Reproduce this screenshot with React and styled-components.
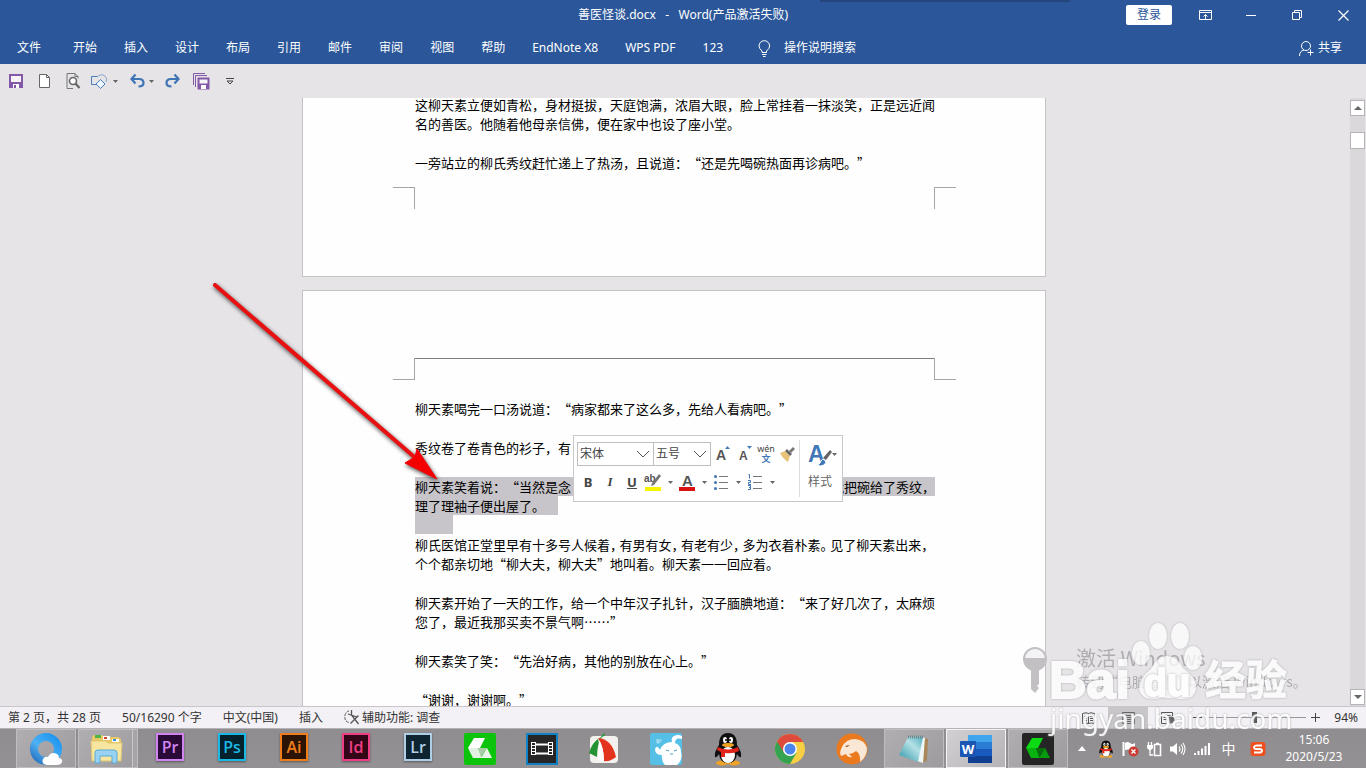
import React from 'react'
import styled, { createGlobalStyle, css } from 'styled-components'

const tabs = ['开始', '插入', '设计', '布局', '引用', '邮件', '审阅', '视图', '帮助', 'EndNote X8', 'WPS PDF', '123']

const adobe = [
  { name: 'Pr', color: '#d183f2', bg: '#2a0a36' },
  { name: 'Ps', color: '#1cb8e4', bg: '#04222e' },
  { name: 'Ai', color: '#f07d1c', bg: '#2c1404' },
  { name: 'Id', color: '#ee3f86', bg: '#330617' },
  { name: 'Lr', color: '#aecfe6', bg: '#0f2431' },
]

export default function App() {
  return (
    <>
      <GlobalStyle />
      <Screen lang="zh-CN">
        <Header>
          <TitleBar>
            <span />
            <Title>善医怪谈.docx&nbsp;&nbsp; -&nbsp;&nbsp; Word(产品激活失败)</Title>
            <WindowButtons>
              <LoginButton>登录</LoginButton>
              <WindowButton aria-label="功能区显示选项"><RibbonIcon /></WindowButton>
              <WindowButton aria-label="最小化"><MinimizeIcon /></WindowButton>
              <WindowButton aria-label="还原"><RestoreIcon /></WindowButton>
              <WindowButton aria-label="关闭"><CloseIcon /></WindowButton>
            </WindowButtons>
          </TitleBar>
          <TabBar>
            <FileTab>文件</FileTab>
            {tabs.map((t) => <Tab key={t}>{t}</Tab>)}
            <TellMe><BulbIcon />操作说明搜索</TellMe>
            <Share><PersonIcon />共享</Share>
          </TabBar>
          <TopShade />
        </Header>

        <QuickAccess>
          <QuickGroup>
            <QuickButton $w={32} aria-label="保存"><SaveIcon /></QuickButton>
            <QuickButton $w={25} aria-label="新建"><NewIcon /></QuickButton>
            <QuickButton $w={33} aria-label="打印预览"><PreviewIcon /></QuickButton>
            <QuickButton $w={18} aria-label="形状"><ShapesIcon /></QuickButton>
            <QuickButton $w={14} aria-label="形状选项"><Caret /></QuickButton>
          </QuickGroup>
          <QuickGroup>
            <QuickButton $w={22} aria-label="撤消"><UndoIcon /></QuickButton>
            <QuickButton $w={6} aria-label="撤消选项"><Caret /></QuickButton>
            <QuickButton $w={36} aria-label="恢复"><UndoIcon flip /></QuickButton>
            <QuickButton $w={22} aria-label="全部保存"><SaveAllIcon /></QuickButton>
            <QuickButton $w={36} aria-label="自定义快速访问工具栏"><MoreIcon /></QuickButton>
          </QuickGroup>
        </QuickAccess>

        <Workspace>
          <Canvas>
            <Page $first>
              <Body>
                <Paragraph>
                  <Line>这柳天素立便如青松，身材挺拔，天庭饱满，浓眉大眼，脸上常挂着一抹淡笑，正是远近闻</Line>
                  <Line>名的善医。他随着他母亲信佛，便在家中也设了座小堂。</Line>
                </Paragraph>
                <Paragraph>
                  <Line>一旁站立的柳氏秀纹赶忙递上了热汤，且说道：“还是先喝碗热面再诊病吧。”</Line>
                </Paragraph>
              </Body>
              <Corners $bottom>
                <Corner $side="left" $bottom />
                <Corner $side="right" $bottom />
              </Corners>
            </Page>

            <Page>
              <Corners>
                <Corner $side="left" />
                <HeaderRule />
                <Corner $side="right" />
              </Corners>
              <Body>
                <Paragraph><Line>柳天素喝完一口汤说道：“病家都来了这么多，先给人看病吧。”</Line></Paragraph>
                <Paragraph><Line>秀纹卷了卷青色的衫子，有</Line></Paragraph>
                <Selected>
                  <SplitLine>
                    <span>柳天素笑着说：“当然是念</span>
                    <span>就把碗给了秀纹，</span>
                  </SplitLine>
                  <Line><Mark $w={143}>理了理袖子便出屋了。</Mark></Line>
                  <Line><Mark $w={38} /></Line>
                </Selected>
                <Paragraph>
                  <Line>
                    柳氏医馆正堂里早有十多号人候着<Tight>，</Tight>有男有女<Tight>，</Tight>有老有少<Tight>，</Tight>多为衣着朴素<Tight>。</Tight>见了柳天素出来，
                  </Line>
                  <Line>个个都亲切地“柳大夫，柳大夫”地叫着。柳天素一一回应着。</Line>
                </Paragraph>
                <Paragraph>
                  <Line>柳天素开始了一天的工作，给一个中年汉子扎针，汉子腼腆地道：“来了好几次了，太麻烦</Line>
                  <Line>您了，最近我那买卖不景气啊……”</Line>
                </Paragraph>
                <Paragraph><Line>柳天素笑了笑：“先治好病，其他的别放在心上。”</Line></Paragraph>
                <Paragraph><Line>“谢谢，谢谢啊。”</Line></Paragraph>
              </Body>
              <MiniToolbar />
              <Arrow />
            </Page>
          </Canvas>
          <Scrollbar>
            <ScrollButton aria-label="向上滚动"><ScrollArrow up /></ScrollButton>
            <Thumb />
            <ScrollButton aria-label="向下滚动"><ScrollArrow /></ScrollButton>
          </Scrollbar>
        </Workspace>

        <StatusBar>
          <StatusText>第 2 页，共 28 页</StatusText>
          <StatusText>50/16290 个字</StatusText>
          <StatusText>中文(中国)</StatusText>
          <StatusText>插入</StatusText>
          <StatusText><AccessIcon />辅助功能: 调查</StatusText>
          <Views>
            <ViewButton aria-label="阅读视图"><ReadIcon /></ViewButton>
            <ViewButton $active aria-label="页面视图"><PrintIcon /></ViewButton>
            <ViewButton aria-label="Web 版式视图"><WebIcon /></ViewButton>
            <ZoomButton aria-label="缩小"><svg width="9" height="9"><path d="M0 4.5h9" stroke="#444" /></svg></ZoomButton>
            <ZoomSlider type="range" min="0" max="100" defaultValue="48" aria-label="显示比例" />
            <ZoomButton aria-label="放大"><svg width="9" height="9"><path d="M0 4.5h9M4.5 0v9" stroke="#444" /></svg></ZoomButton>
            <Percent>94%</Percent>
          </Views>
        </StatusBar>

        <Taskbar>
          <Tasks>
            <Task $open aria-label="QQ浏览器"><BrowserIcon /></Task>
            <Task $open $stack aria-label="文件资源管理器"><FolderIcon /></Task>
            {adobe.map((a) => (
              <Task key={a.name}><AdobeTile $color={a.color} $bg={a.bg}>{a.name}</AdobeTile></Task>
            ))}
            <Task aria-label="Camtasia"><CamtasiaIcon /></Task>
            <Task aria-label="视频编辑"><FilmIcon /></Task>
            <Task aria-label="FastStone"><FastStoneIcon /></Task>
            <Task aria-label="助手"><BunnyIcon /></Task>
            <Task aria-label="QQ"><PenguinIcon size={34} /></Task>
            <Task aria-label="Chrome"><ChromeIcon /></Task>
            <Task aria-label="猎豹浏览器"><CheetahIcon /></Task>
            <Task $open aria-label="记事本"><NotepadIcon /></Task>
            <Task $open $current aria-label="Word"><WordIcon /></Task>
            <Task $open aria-label="录制"><CamtasiaIcon dark /></Task>
          </Tasks>
          <Tray>
            <TrayButton aria-label="显示隐藏的图标"><svg width="8" height="5"><path d="M4 0l4 5H0z" fill="#fff" /></svg></TrayButton>
            <TrayButton aria-label="QQ"><PenguinIcon size={18} /></TrayButton>
            <TrayButton aria-label="操作中心"><FlagIcon /></TrayButton>
            <TrayButton aria-label="电源"><BatteryIcon /></TrayButton>
            <TrayButton aria-label="音量"><SpeakerIcon /></TrayButton>
            <TrayButton aria-label="网络"><SignalIcon /></TrayButton>
            <TrayButton $wide>中</TrayButton>
            <TrayButton $wide aria-label="搜狗输入法"><SogouIcon /></TrayButton>
            <Clock>
              <span>15:06</span>
              <span>2020/5/23</span>
            </Clock>
          </Tray>
        </Taskbar>
        <Watermark />
      </Screen>
    </>
  )
}

function MiniToolbar() {
  return (
    <Mini>
      <MiniMain>
        <MiniRow>
          <Combo $w={77}>
            <select aria-label="字体" defaultValue="宋体"><option>宋体</option></select>
            <Chevron />
          </Combo>
          <Combo $w={58}>
            <select aria-label="字号" defaultValue="五号"><option>五号</option></select>
            <Chevron />
          </Combo>
          <MiniIcons>
            <MiniButton aria-label="增大字号">
              <svg width="14" height="16"><text x="1" y="14" fontFamily="Liberation Sans" fontWeight="700" fontSize="14" fill="#555">A</text><path d="M10 3l2.500-3 2.500 3z" fill="#4a7ebb" /></svg>
            </MiniButton>
            <MiniButton aria-label="减小字号">
              <svg width="14" height="16"><text x="2" y="14" fontFamily="Liberation Sans" fontWeight="700" fontSize="12" fill="#555">A</text><path d="M10 0h5l-2.500 3z" fill="#4a7ebb" /></svg>
            </MiniButton>
            <MiniButton aria-label="拼音指南">
              <Pinyin><span>wén</span><b>文</b></Pinyin>
            </MiniButton>
            <MiniButton aria-label="格式刷"><BrushIcon /></MiniButton>
          </MiniIcons>
        </MiniRow>
        <MiniRow>
          <Letter $bold>B</Letter>
          <Letter $italic>I</Letter>
          <Letter $underline>U</Letter>
          <MiniButton aria-label="突出显示">
            <svg width="18" height="18"><text x="0" y="9" fontFamily="Liberation Sans" fontWeight="700" fontSize="10" fill="#555">ab</text><path d="M15 1l2 2-7 9-3 1 1-3z" fill="#777" /><path d="M1 14h16v4H1z" fill="#f8f400" /></svg>
          </MiniButton>
          <CaretSlot><Caret /></CaretSlot>
          <MiniButton aria-label="字体颜色">
            <svg width="16" height="18"><text x="3" y="13" fontFamily="Liberation Sans" fontWeight="700" fontSize="15" fill="#555">A</text><path d="M0 14h16v4H0z" fill="#d91111" /></svg>
          </MiniButton>
          <CaretSlot><Caret /></CaretSlot>
          <MiniButton aria-label="项目符号">
            <svg width="14" height="16"><path d="M5 2.500h9M5 8.500h9M5 14.500h9" stroke="#777" /><g fill="#3f74b5"><circle cx="1.500" cy="2.500" r="1.500" /><circle cx="1.500" cy="8.500" r="1.500" /><circle cx="1.500" cy="14.500" r="1.500" /></g></svg>
          </MiniButton>
          <CaretSlot><Caret /></CaretSlot>
          <MiniButton aria-label="编号">
            <svg width="14" height="16"><path d="M5 2.500h9M5 8.500h9M5 14.500h9" stroke="#777" /><g stroke="#3f74b5" fill="none"><path d="M0.500 .5h1v4M0 6.500h2.500v2h-2v2h2.500M0 11.500h2.500v4H0M1 13.500h1" /></g></svg>
          </MiniButton>
          <CaretSlot><Caret /></CaretSlot>
        </MiniRow>
      </MiniMain>
      <StyleButton>
        <svg width="30" height="24">
          <text x="0" y="19" fontFamily="Liberation Sans" fontWeight="700" fontSize="23" fill="#3f78b8">A</text>
          <path d="M22 7l2 2-6 8-3-2z" fill="#666" />
          <path d="M8 22q4 0 5-4 1-3 4-1 2 3-1 5-3 2-8 0z" fill="#3f78b8" stroke="#fff" />
          <path d="M24 10h5l-2.500 3z" fill="#666" />
        </svg>
        样式
      </StyleButton>
    </Mini>
  )
}

/* icons */

const Svg = ({ w, h, children, ...rest }) => (
  <svg width={w} height={h} viewBox={`0 0 ${w} ${h}`} fill="none" aria-hidden="true" {...rest}>{children}</svg>
)

const Caret = () => <Svg w={5} h={3}><path d="M0 0h5L2.500 3z" fill="#666" /></Svg>
const Chevron = () => <Svg w={14} h={8}><path d="M1 1l6 6 6-6" stroke="#555" /></Svg>

const RibbonIcon = () => (
  <Svg w={13} h={10}><path d="M.5.5h12v9H.5zM.5 2.500h12M6.500 9V4.500M4.500 6.500l2-2 2 2" stroke="#fff" /></Svg>
)
const MinimizeIcon = () => <Svg w={10} h={10}><path d="M0 5.500h10" stroke="#fff" /></Svg>
const RestoreIcon = () => (
  <Svg w={10} h={10}><path d="M.5 2.500h7v7h-7zM2.500 2.500v-2h7v7h-2" stroke="#fff" /></Svg>
)
const CloseIcon = () => <Svg w={11} h={11}><path d="M.5.5l10 10M10.500.5l-10 10" stroke="#fff" strokeWidth="1.200" /></Svg>

const BulbIcon = () => (
  <Svg w={13} h={17}><path d="M4 12.500V11Q1 8.500 1 6a5.300 5.300 0 0 1 10.600 0Q11.600 8.500 8.500 11v1.500zM4 14.500h4.500M5 16.500h2.500" stroke="#fff" /></Svg>
)
const PersonIcon = () => (
  <Svg w={15} h={17}><circle cx="7" cy="6" r="4.500" stroke="#fff" /><path d="M.5 16q0-5 4.500-6M8.500 12.500h6M11.500 9.500v6" stroke="#fff" /></Svg>
)

const SaveIcon = () => (
  <Svg w={14} h={14}><path d="M1 1h12v12H1z" fill="#f6f3f9" stroke="#8458a8" strokeWidth="2" /><path d="M1 8h12v6H1z" fill="#8458a8" /><path d="M4 10h6v4H4z" fill="#fff" /><path d="M5 11h2v3H5z" fill="#8458a8" /></Svg>
)
const NewIcon = () => (
  <Svg w={11} h={14}><path d="M.5.5h7l3 3v10H.5z" fill="#fff" stroke="#666" /><path d="M7.500.5v3h3" stroke="#666" /></Svg>
)
const PreviewIcon = () => (
  <Svg w={15} h={16}><path d="M1 15.500V.5h8l3 3v2M1 15.500h6M9 .5v3h3" stroke="#777" /><circle cx="7" cy="8" r="3.500" fill="#fff" stroke="#666" strokeWidth="1.600" /><path d="M9.500 10.500l4 4.500" stroke="#666" strokeWidth="2.200" /></Svg>
)
const ShapesIcon = () => (
  <Svg w={17} h={15}><path d="M7 10.500H.5v-8H7" stroke="#4a7ebb" /><path d="M6 3q4-4 8-1 3 3 1 6" stroke="#8aa9cc" /><path d="M9.500 5.500l4.500 4.500-4.500 4.500L5 10z" fill="#eef4fb" stroke="#4a7ebb" /></Svg>
)
const UndoIcon = ({ flip }) => (
  <Svg w={15} h={14} transform={flip ? 'scale(-1 1)' : undefined}>
    <path d="M1 5h8q4.500 0 4.500 4 0 3.500-5 3.500" stroke="#3f74b5" strokeWidth="2.200" />
    <path d="M5.500 .5L1.500 5l4 4.500" stroke="#3f74b5" strokeWidth="2.200" />
  </Svg>
)
const SaveAllIcon = () => (
  <Svg w={17} h={17}><path d="M.5 12V.5H12M2.500 14V2.500H14" stroke="#8458a8" /><path d="M5.500 5.500h10v10h-10z" fill="#f6f3f9" stroke="#8458a8" strokeWidth="2" /><path d="M5 10.500h11V16H5z" fill="#8458a8" /><path d="M8 12h5v4H8z" fill="#fff" /></Svg>
)
const MoreIcon = () => <Svg w={8} h={7}><path d="M0 .5h8" stroke="#444" /><path d="M1 3l3 3 3-3z" stroke="#444" /></Svg>

const BrushIcon = () => (
  <Svg w={16} h={15}><path d="M0 6l5-2 5 5-2 6q-5-3-8-9z" fill="#e9c27a" /><path d="M5 4l2-2 5 5-2 2z" fill="#666" /><path d="M9 4l4-4 2 2-4 4z" fill="#777" /></Svg>
)

const ScrollArrow = ({ up }) => (
  <Svg w={8} h={4}><path d={up ? 'M0 4l4-4 4 4z' : 'M0 0h8L4 4z'} fill="#666" /></Svg>
)

const AccessIcon = () => (
  <Svg w={16} h={15}><path d="M5 .8Q.8 2.500.8 7t4.200 5.500" stroke="#555" strokeDasharray="3 1" /><path d="M7.500 0v5l7 9M14.500 5.500l-8 8M4 4l9 3" stroke="#555" strokeWidth="1.300" /></Svg>
)
const ReadIcon = () => (
  <Svg w={13} h={12}><path d="M.5 1.500q4-1.500 6 0v10q-3-1-6 0zM12.500 1.500q-4-1.500-6 0v10q3-1 6 0zM2 4.500h3M2 6.500h3M2 8.500h3M8 4.500h3M8 6.500h3M8 8.500h3" stroke="#555" /></Svg>
)
const PrintIcon = () => <Svg w={13} h={12}><path d="M.5.5h12v11H.5zM3 3.500h7M3 5.500h7M3 7.500h7M3 9.500h7" stroke="#666" /></Svg>
const WebIcon = () => (
  <Svg w={14} h={12}><path d="M6 11.500H.5V.5h11V4M2.500 3.500h7M2.500 5.500h4M2.500 7.500h3" stroke="#555" /><circle cx="10" cy="8" r="3.500" fill="#666" /></Svg>
)

const BrowserIcon = () => (
  <Svg w={34} h={34}>
    <circle cx="17" cy="17" r="12" stroke="url(#qb)" strokeWidth="8" />
    <path d="M18 33q-6-1-4-6 2-3 5-2 3-6 9-3 2 1 2 4 4 1 3 4-1 3-5 3z" fill="#fff" />
    <defs><linearGradient id="qb" x1="30" y1="2" x2="4" y2="30" gradientUnits="userSpaceOnUse"><stop stopColor="#1590ef" /><stop offset=".6" stopColor="#4db1f4" /><stop offset="1" stopColor="#256bb9" /></linearGradient></defs>
  </Svg>
)
const FolderIcon = () => (
  <Svg w={33} h={32}>
    <path d="M2 4l2-2h8l2 2h14l3 2v22H2z" fill="#e8c964" />
    <path d="M5 2h6v3H5z" fill="#4db54a" /><path d="M13 3h7v4h-7z" fill="#fff" /><path d="M14 4h3v2h-3z" fill="#d8442f" /><path d="M22 6h7v3h-7z" fill="#fff" /><path d="M23 6h3v2h-3z" fill="#3a8fd8" />
    <path d="M1 8h15l2 2h14l-1 18H2z" fill="#f6e6a0" stroke="#dfc673" />
    <path d="M5 30V20q0-3 3-3h16q3 0 3 3v10h-5v-7H10v7z" fill="#9ad3f1" stroke="#5aa9d6" />
  </Svg>
)
const CamtasiaIcon = ({ dark }) => (
  <Svg w={32} h={32}>
    <rect width="32" height="32" rx="2" fill={dark ? '#252525' : '#0cc40c'} />
    <path d="M10 5h11l-5 10H4z" fill={dark ? '#0cdb16' : '#fff'} />
    <path d="M4 15h10l4 10H9z" fill={dark ? '#08b310' : '#e3f1e3'} />
    <path d="M14 15h9l-6 9z" fill={dark ? '#056f0a' : '#a9cda9'} />
    <path d="M23 15l5 10H17z" fill={dark ? '#079c0d' : '#eaf5ea'} />
  </Svg>
)
const FilmIcon = () => (
  <Svg w={32} h={32}>
    <rect x="1" y="1" width="30" height="30" fill="#262626" stroke="#1281c4" strokeWidth="2" />
    <path d="M6 9.500h4M6 12.500h4M6 15.500h4M6 18.500h4M6 21.500h4M22 9.500h4M22 12.500h4M22 15.500h4M22 18.500h4M22 21.500h4M5.500 9v13M9.500 9v13M22.500 9v13M26.500 9v13" stroke="#fff" />
    <path d="M10 11.500h12M10 20.500h12" stroke="#fff" strokeWidth="1.800" />
  </Svg>
)
const FastStoneIcon = () => (
  <Svg w={32} h={32}>
    <rect x="2" y="3" width="28" height="27" rx="4" fill="#f3f1ee" />
    <path d="M16 0l1 2-4 3Q9 12 9 24l-8-4Q4 9 13 4z" fill="#239331" />
    <path d="M10 5q14 1 18 19-6 5-12 4 0-14-6-23z" fill="#e3341d" />
    <path d="M10 5q6 9 6 23-4 0-6-2 2-12 0-21z" fill="#fff" />
  </Svg>
)
const BunnyIcon = () => (
  <Svg w={32} h={32}>
    <rect width="32" height="32" rx="2" fill="#55bfe6" />
    <path d="M22 9Q20 2 29 2l3 1v3q-7-2-7 4 6 2 6 9 2 8-4 13H15q-4-4-3-10-7 0-7-6 2-5 5 1 3-8 12-8z" fill="#fff" />
    <path d="M16 17l3 1M24 18l3-1M20 21h3" stroke="#4a9fc0" /><path d="M6 7h6M6 9h5M8 6v5" stroke="#b7e5f6" />
  </Svg>
)
const PenguinIcon = ({ size }) => (
  <svg width={size} height={size} viewBox="0 0 34 34" aria-hidden="true">
    <ellipse cx="11" cy="31" rx="6" ry="2.500" fill="#efa328" /><ellipse cx="23" cy="31" rx="6" ry="2.500" fill="#efa328" />
    <path d="M8 13Q8 1 17 1t9 12q5 7 4 12-2 1-4-3-1 9-9 9t-9-9q-2 4-4 3-1-5 4-12z" fill="#101010" />
    <ellipse cx="17" cy="23" rx="7" ry="8" fill="#fff" />
    <ellipse cx="14" cy="8" rx="2" ry="3" fill="#fff" /><ellipse cx="20" cy="8" rx="2" ry="3" fill="#fff" />
    <circle cx="15" cy="8" r="1" fill="#000" /><circle cx="19" cy="8" r="1" fill="#000" />
    <ellipse cx="17" cy="13" rx="6" ry="2" fill="#f2a21f" />
    <path d="M7 15q10 5 20 0l1 4q-6 3-14 2v4h-4v-5l-4-2z" fill="#e2231a" />
  </svg>
)
const ChromeIcon = () => (
  <Svg w={32} h={32}>
    <circle cx="16" cy="16" r="15" fill="#f7cf45" />
    <path d="M16 16L3 8.500A15 15 0 0 0 16 31l6.500-11.200z" fill="#35a351" />
    <path d="M16 9h13.200A15 15 0 0 0 3 8.500l6.900 11z" fill="#de4b3c" />
    <circle cx="16" cy="16" r="7" fill="#fff" /><circle cx="16" cy="16" r="5.500" fill="#4a84ec" />
  </Svg>
)
const CheetahIcon = () => (
  <Svg w={32} h={32}>
    <circle cx="16" cy="16" r="15.500" fill="#ea7a1d" />
    <path d="M6 14q4-8 13-8 10 1 12 9 0 9-7 14 1-8-4-11l-3 2-4 1 3 3q-4 1-6-3l-5 2q-2-4 1-9z" fill="#fbe7d5" />
    <path d="M9 13l5-1-3 2z" fill="#8d3a05" />
  </Svg>
)
const NotepadIcon = () => (
  <Svg w={32} h={30}>
    <path d="M25 4l5 1-1 22-6 2z" fill="#a9865a" /><path d="M23 3l4 1-2 25-6-2z" fill="#eef6f7" />
    <path d="M10 3h15l-5 25-19-7z" fill="url(#np)" />
    <path d="M10 3h15" stroke="#66898d" strokeWidth="3" strokeDasharray="1 1" />
    <defs><linearGradient id="np" x1="4" y1="26" x2="24" y2="4" gradientUnits="userSpaceOnUse"><stop stopColor="#3f9fb0" /><stop offset=".6" stopColor="#b4e1e6" /><stop offset="1" stopColor="#5fb4c2" /></linearGradient></defs>
  </Svg>
)
const WordIcon = () => (
  <Svg w={32} h={28}>
    <path d="M8 0h24v7H8z" fill="#41a5ee" /><path d="M8 7h24v7H8z" fill="#2b7cd3" /><path d="M8 14h24v7H8z" fill="#185abd" /><path d="M8 21h24v7H8z" fill="#103f91" />
    <rect y="6" width="16" height="16" rx="1" fill="#1b56b4" />
    <text x="8" y="19" textAnchor="middle" fontFamily="Open Sans" fontWeight="700" fontSize="13" fill="#fff">W</text>
  </Svg>
)
const FlagIcon = () => (
  <Svg w={17} h={16}><path d="M1.500 1v14" stroke="#fff" strokeWidth="2" /><path d="M3 2q3-2 5 0t5 0v7q-3 1-5 0t-5 0z" fill="#fff" /><circle cx="11.500" cy="10.500" r="5" fill="#cc3a33" /><path d="M9.500 8.500l4 4M13.500 8.500l-4 4" stroke="#fff" strokeWidth="1.400" /></Svg>
)
const BatteryIcon = () => (
  <Svg w={15} h={16}><path d="M7.500 3.500h6v11h-6zM9 2.500h3" stroke="#fff" strokeWidth="1.600" /><path d="M1.500 1v3M4.500 1v3M3 8v6h3" stroke="#fff" strokeWidth="1.300" /><path d="M0 4h6v3L4 9H2L0 7z" fill="#fff" /></Svg>
)
const SpeakerIcon = () => (
  <Svg w={16} h={14}><path d="M0 4.500h3L7 1v12L3 9.500H0z" fill="#fff" /><path d="M9 4.500q2 2.500 0 5M11 2.500q3.500 4.500 0 9M13 1q4 6 0 12" stroke="#fff" strokeWidth="1.100" /></Svg>
)
const SignalIcon = () => (
  <Svg w={16} h={12}><path d="M0 10h2v2H0zM3.500 8h2v4h-2zM7 5.500h2V12H7zM10.500 3h2v9h-2zM14 0h2v12h-2z" fill="#fff" /></Svg>
)
const SogouIcon = () => (
  <Svg w={16} h={16}><rect x=".5" y="1" width="15" height="14" rx="3" fill="#ee4f1f" /><path d="M12 4.500H7Q4 4.500 4 6.300T7 8h2.500Q12 8 12 9.800T9 11.500H4" stroke="#fff" strokeWidth="1.900" /></Svg>
)

const Arrow = () => (
  <ArrowSvg width="236" height="210" viewBox="0 0 236 210" aria-hidden="true">
    <path d="M10 8L214 184" stroke="#e81010" strokeWidth="4" strokeLinecap="round" />
    <path d="M232 202l-20-30-2 8-10 6z" fill="#f40000" stroke="#f40000" />
  </ArrowSvg>
)

const Watermark = () => (
  <WatermarkSvg width="300" height="132" viewBox="0 0 300 132" aria-hidden="true">
    <g fill="#9c9a9e" opacity=".75" fontFamily="Noto Sans CJK SC, sans-serif">
      <text x="60" y="54" fontSize="20">激活 Windows</text>
      <text x="60" y="75" fontSize="14">转到“电脑设置”以激活 Windows。</text>
    </g>
    <circle cx="19" cy="47" r="11" fill="#f4f3f5" stroke="#c2c0c3" strokeWidth="2" />
    <path d="M8 46h23q-1 9-8 12v14l-2 2 2 2-4 5-4-4V58q-7-3-7-12z" fill="#c2c0c3" />
    <Glow fill="#fff" opacity=".75">
      <ellipse cx="125" cy="41" rx="9" ry="12" />
      <ellipse cx="142" cy="24" rx="9" ry="13" />
      <ellipse cx="164" cy="24" rx="9" ry="13" />
      <ellipse cx="177" cy="46" rx="9" ry="12" />
      <path d="M151 44q10 0 16 12 14 10 13 21-2 11-15 10-14-2-28 0-12 0-14-10 0-11 12-20 6-13 16-13z" />
    </Glow>
    <Glow fill="#fff" stroke="#fff" strokeWidth="2" fontWeight="700" opacity=".85">
      <text x="33" y="86" fontFamily="Liberation Sans" fontSize="52">Bai</text>
      <text x="151" y="84" textAnchor="middle" fontFamily="Liberation Sans" fontSize="38">du</text>
      <text x="189" y="83" fontFamily="Noto Sans CJK SC" strokeWidth="1" fontSize="41">经验</text>
    </Glow>
    <Glow fill="#fff" opacity=".9">
      <text x="34" y="117" fontFamily="Noto Sans" fontSize="28">jingyan.baidu.com</text>
    </Glow>
  </WatermarkSvg>
)

/* styles */

const uiFont = '"Noto Sans", "Noto Sans CJK SC", sans-serif'

const GlobalStyle = createGlobalStyle`
  * { box-sizing: border-box; }
  body { margin: 0; overflow: hidden; }
  button, select, input {
    margin: 0;
    padding: 0;
    border: none;
    background: none;
    color: inherit;
    font: inherit;
  }
  svg { flex: none; display: block; overflow: visible; }
`

const Screen = styled.div`
  position: relative;
  display: flex;
  flex-direction: column;
  height: 100vh;
  overflow: hidden;
  font: 12px/16px ${uiFont};
  color: #333;
  background: #e6e4e7;
`

const Header = styled.header`
  position: relative;
  background: #2b579a;
  color: #fff;
`

const TopShade = styled.div`
  position: absolute;
  top: 0;
  left: 60%;
  width: 250px;
  height: 2px;
  background: #24467c;
`

const TitleBar = styled.div`
  display: grid;
  grid-template-columns: 1fr auto 1fr;
  align-items: center;
  height: 30px;
`

const Title = styled.div`
  white-space: pre;
`

const WindowButtons = styled.div`
  display: flex;
  justify-content: flex-end;
  align-items: center;
`

const WindowButton = styled.button`
  display: grid;
  place-items: center;
  width: 46px;
  height: 30px;
`

const LoginButton = styled.button`
  width: 46px;
  height: 20px;
  margin-right: 10px;
  border-radius: 2px;
  background: #fff;
  color: #2b579a;
`

const TabBar = styled.nav`
  display: flex;
  align-items: center;
  gap: 27px;
  height: 34px;
  padding: 2px 24px 0 17px;
`

const Tab = styled.button`
  white-space: nowrap;
`

const FileTab = styled(Tab)`
  margin-right: 5px;
`

const TellMe = styled(Tab)`
  display: flex;
  align-items: center;
  gap: 13px;
  margin-left: 8px;
`

const Share = styled(Tab)`
  display: flex;
  align-items: center;
  gap: 4px;
  margin-left: auto;
`

const QuickAccess = styled.div`
  display: flex;
  align-items: center;
  gap: 4px;
  height: 34px;
`

const QuickGroup = styled.div`
  display: flex;
`

const QuickButton = styled.button`
  display: grid;
  place-items: center;
  width: ${(p) => p.$w}px;
  height: 24px;
`

const Workspace = styled.main`
  display: flex;
  flex: 1;
  min-height: 0;
`

const Canvas = styled.div`
  display: flex;
  flex-direction: column;
  align-items: center;
  gap: 13px;
  flex: 1;
  overflow: hidden;
`

const Page = styled.article`
  position: relative;
  flex: none;
  width: 744px;
  min-height: ${(p) => (p.$first ? 182 : 1052)}px;
  margin-top: ${(p) => (p.$first ? -3 : 0)}px;
  padding: ${(p) => (p.$first ? 0 : 67)}px 89px 0 90px;
  border: 1px solid #c4c2c5;
  border-top-width: ${(p) => (p.$first ? 0 : 1)}px;
  background: #fefefe;
`

const Corners = styled.div`
  display: flex;
  justify-content: space-between;
  margin: ${(p) => (p.$bottom ? '15px 0 0' : '0 0 19px')};
`

const Corner = styled.div`
  width: 22px;
  height: 22px;
  border: 0 solid #a6a6a6;
  ${(p) => (p.$side === 'left' ? 'border-right-width: 1px;' : 'border-left-width: 1px;')}
  ${(p) => (p.$bottom ? 'border-top-width: 1px;' : 'border-bottom-width: 1px;')}
`

const HeaderRule = styled.div`
  flex: 1;
  border-top: 1px solid #7f7f7f;
`

const Body = styled.div`
  display: flex;
  flex-direction: column;
  gap: 20px;
  padding: 0 21px 0 22px;
  font: 13px/19px "Noto Sans CJK SC", sans-serif;
  text-spacing-trim: space-all;
  color: #000;
`

const Paragraph = styled.p`
  margin: 0;
`

/* the empty selected line takes the place of the gap */
const Selected = styled(Paragraph)`
  margin-bottom: -19px;
`

const Line = styled.span`
  display: block;
  height: 19px;
  white-space: nowrap;
`

const selection = css`
  background: #c7c5c9;
`

const SplitLine = styled(Line)`
  display: flex;
  justify-content: space-between;
  ${selection}
`

const Mark = styled.span`
  display: block;
  width: ${(p) => p.$w}px;
  height: 19px;
  ${selection}
`

const Tight = styled.span`
  font-feature-settings: "halt";
  margin-right: 3px;
`

const Mini = styled.div`
  position: absolute;
  top: 144px;
  left: 270px;
  display: flex;
  width: 270px;
  height: 67px;
  padding: 4px 3px;
  border: 1px solid #c9c7ca;
  background: #fff;
  color: #444;
`

const MiniMain = styled.div`
  flex: 1;
  border-right: 1px solid #dddbde;
`

const MiniRow = styled.div`
  display: flex;
  align-items: center;
  height: 28px;
`

const Combo = styled.label`
  display: grid;
  grid-template-columns: 1fr 17px;
  align-items: center;
  width: ${(p) => p.$w}px;
  height: 24px;
  border: 1px solid #c0bec1;

  & + & {
    margin-left: -1px;
  }

  select {
    grid-area: 1 / 1 / 2 / 3;
    appearance: none;
    padding-left: 2px;
    width: 100%;
    height: 20px;
  }

  svg {
    grid-area: 1 / 2;
    pointer-events: none;
  }
`

const MiniIcons = styled.div`
  display: flex;
  justify-content: space-around;
  flex: 1;
`

const MiniButton = styled.button`
  display: grid;
  place-items: center;
  width: 20px;
  height: 22px;
`

const Letter = styled.button`
  width: 22px;
  height: 22px;
  font-family: ${(p) => (p.$italic ? '"Liberation Serif", serif' : uiFont)};
  font-size: 13px;
  font-weight: 700;
  font-style: ${(p) => (p.$italic ? 'italic' : 'normal')};
  text-decoration: ${(p) => (p.$underline ? 'underline' : 'none')};
`

const CaretSlot = styled.button`
  display: grid;
  place-items: center;
  width: 14px;
  height: 22px;
`

const Pinyin = styled.span`
  display: grid;
  justify-items: center;
  font-size: 9px;
  line-height: 10px;

  b {
    color: #3f78b8;
  }
`

const StyleButton = styled.button`
  display: flex;
  flex-direction: column;
  align-items: flex-start;
  gap: 7px;
  width: 39px;
  padding: 3px 0 0 8px;
  color: #666;
`

const ArrowSvg = styled.svg`
  position: absolute;
  top: -14px;
  left: -98px;
  filter: drop-shadow(1px 2px 2px rgba(0, 0, 0, 0.7));
  pointer-events: none;
`

const Scrollbar = styled.div`
  display: flex;
  flex-direction: column;
  width: 18px;
  padding: 2px 1px 1px 2px;
  background: linear-gradient(to right, transparent 2px, #dad8db 2px, #dad8db 17px, transparent 17px);
`

const ScrollButton = styled.button`
  display: grid;
  place-items: center;
  height: 16px;
  border: 1px solid #b5b3b6;
  background: #fff;
`

const Thumb = styled.div`
  height: 17px;
  margin: 16px 0 auto;
  border: 1px solid #b5b3b6;
  background: #fff;
`

const StatusBar = styled.footer`
  display: flex;
  align-items: center;
  gap: 21px;
  height: 22px;
  padding: 0 8px;
  border-top: 1px solid #c8c6ca;
  background: #f3f1f5;
`

const StatusText = styled.span`
  display: flex;
  align-items: center;
  gap: 2px;
  white-space: pre;
`

const Views = styled.div`
  display: flex;
  align-items: center;
  margin-left: auto;
`

const ViewButton = styled.button`
  display: grid;
  place-items: center;
  width: 40px;
  height: 21px;
  background: ${(p) => (p.$active ? '#c8c6c9' : 'none')};
`

const ZoomButton = styled.button`
  display: grid;
  place-items: center;
  width: 18px;
  height: 20px;
`

const ZoomSlider = styled.input`
  appearance: none;
  width: 100px;
  height: 12px;
  background: linear-gradient(#9a989b, #9a989b) center / 100% 1px no-repeat;

  &::-webkit-slider-thumb {
    appearance: none;
    width: 5px;
    height: 11px;
    background: #555;
  }
`

const Percent = styled.span`
  width: 34px;
  text-align: right;
`

const Taskbar = styled.div`
  display: flex;
  justify-content: space-between;
  height: 40px;
  padding: 0 19px 0 16px;
  border-top: 1px solid #b5b3b5;
  background: linear-gradient(#8f8d8f, #939193);
`

const Tasks = styled.div`
  display: flex;
  gap: 2px;
`

const Task = styled.button`
  display: grid;
  place-items: center;
  width: 60px;
  height: 39px;
  border: 1px solid transparent;
  ${(p) => p.$open && css`
    border-color: #bfbdbf;
    background: linear-gradient(135deg, #b0aeb0, #9d9b9d);
  `}
  ${(p) => p.$stack && css`
    padding-right: 4px;
    box-shadow: inset -4px 0 #a6a4a6, inset -5px 0 #c9c7c9;
  `}
  ${(p) => p.$current && css`
    border: 1px solid #f4f4f4;
    background: linear-gradient(135deg, #d2d0d2, #b5b3b5);
  `}
`

const AdobeTile = styled.span`
  display: grid;
  place-items: center;
  width: 28px;
  height: 28px;
  margin-bottom: 3px;
  border: 2px solid ${(p) => p.$color};
  background: ${(p) => p.$bg};
  box-shadow: 0 1px 2px rgba(0, 0, 0, 0.4);
  color: ${(p) => p.$color};
  font: 600 16px/20px "Open Sans", sans-serif;
`

const Tray = styled.div`
  display: flex;
  align-items: center;
  color: #fff;
`

const TrayButton = styled.button`
  display: grid;
  place-items: center;
  width: ${(p) => (p.$wide ? 29 : 24)}px;
  height: 39px;
  font-size: 14px;
`

const Clock = styled.time`
  display: flex;
  flex-direction: column;
  align-items: center;
  gap: 1px;
  width: 66px;
  margin-left: 9px;
`

const WatermarkSvg = styled.svg`
  position: absolute;
  right: 50px;
  bottom: 24px;
  pointer-events: none;
`

const Glow = styled.g`
  filter: drop-shadow(0 0 1px #a5a3a8);
`
